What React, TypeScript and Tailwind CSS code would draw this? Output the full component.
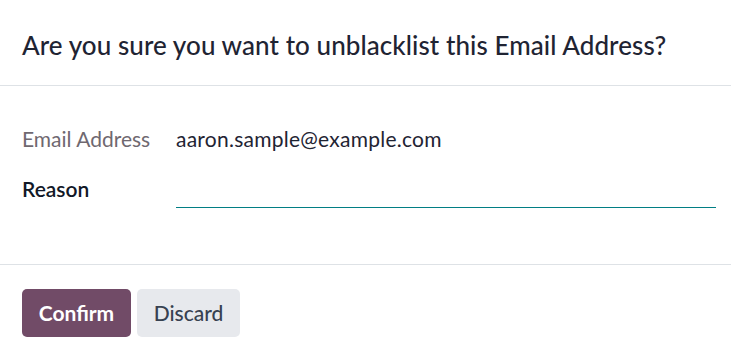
export default function App() {
  return (
    <div className="w-[731px] h-[358px] bg-white font-['Lato','Liberation_Sans',sans-serif] text-[#1f2433]">
      <header className="h-[86px] flex items-center px-[22px] pt-[5px] border-b border-[#dee2e6]">
        <h4 className="text-[26px] leading-none font-medium tracking-[0.07px] text-[#1f2433]">
          Are you sure you want to unblacklist this Email Address?
        </h4>
      </header>
      <main className="h-[179px] border-b border-[#dee2e6] pl-[22px] pr-[15px] pt-[37px] flex flex-col gap-[18px]">
        <div className="h-[32px] flex items-center">
          <label className="w-[154px] shrink-0 text-[21px] text-[#6f6870]">Email Address</label>
          <span className="text-[21px] tracking-[0.25px] text-[#1f2433]">aaron.sample@example.com</span>
        </div>
        <div className="h-[35px] flex items-center">
          <label className="w-[154px] shrink-0 pb-[3px] text-[21px] font-semibold text-[#111827]">Reason</label>
          <div className="flex-1 h-full border-b border-[#017e84]"></div>
        </div>
      </main>
      <footer className="flex gap-[6px] px-[22px] pt-[24px]">
        <button className="w-[109px] h-[48px] rounded-[5px] bg-[#714b67] text-white text-[21px] font-bold">
          Confirm
        </button>
        <button className="w-[103px] h-[48px] rounded-[5px] bg-[#e7e9ed] text-[#374151] text-[21px] font-medium">
          Discard
        </button>
      </footer>
    </div>
  );
}
